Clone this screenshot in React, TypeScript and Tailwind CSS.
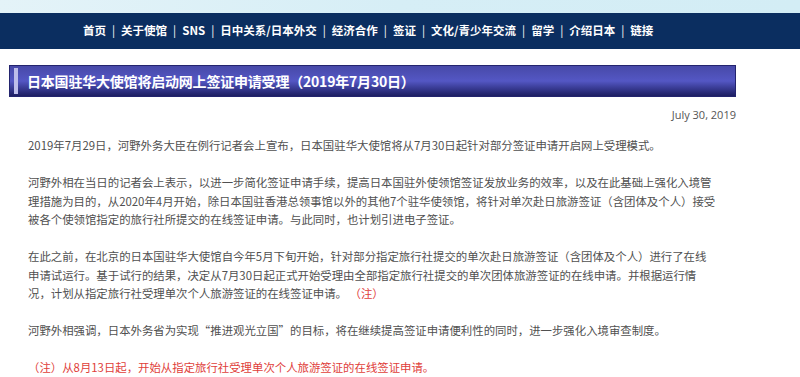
import React from "react";

const navItems = ["首页", "关于使馆", "SNS", "日中关系/日本外交", "经济合作", "签证", "文化/青少年交流", "留学", "介绍日本", "链接"];

export default function App() {
  const cjk = { fontFamily: '"Noto Sans CJK SC", "Noto Sans", sans-serif' };
  return (
    <div className="w-[800px] h-[377px] overflow-hidden bg-white" style={cjk}>
      <div className="h-[13px] bg-gradient-to-r from-[#e4f3f8] via-[#d6eef6] to-[#d3edf5]" />
      <div className="h-[36px] bg-[#0b2e60] flex items-center pl-[83px] text-white font-bold text-[11.5px] leading-none">
        {navItems.map((n, i) => (
          <React.Fragment key={n}>
            <span>{n}</span>
            {i < navItems.length - 1 && <span className="px-[6px] font-normal">|</span>}
          </React.Fragment>
        ))}
      </div>
      <div className="pt-[16px] pl-[9px]">
        <div className="w-[727px] h-[32px] flex items-center border border-[#23246e] bg-gradient-to-b from-[#4749a8] via-[#5457c4] to-[#1d1e62]">
          <div className="ml-[4px] w-[4px] h-[26px] bg-[#bdbdea]" />
          <div className="ml-[9px] text-white font-bold text-[14px] leading-none tracking-[-0.2px]">
            日本国驻华大使馆将启动网上签证申请受理（2019年7月30日）
          </div>
        </div>
      </div>
      <div className="w-[736px] mt-[9px] h-[18px] flex items-center justify-end text-[11px] text-[#555]" style={{ fontFamily: '"Open Sans", sans-serif' }}>
        July 30, 2019
      </div>
      <div className="pl-[28px] pt-[12px] w-[716.5px] text-[11.4px] leading-[18.5px] text-[#505050] flex flex-col gap-[18.5px]">
        <p>2019年7月29日，河野外务大臣在例行记者会上宣布，日本国驻华大使馆将从7月30日起针对部分签证申请开启网上受理模式。</p>
        <p>河野外相在当日的记者会上表示，以进一步简化签证申请手续，提高日本国驻外使领馆签证发放业务的效率，以及在此基础上强化入境管理措施为目的，从2020年4月开始，除日本国驻香港总领事馆以外的其他7个驻华使领馆，将针对单次赴日旅游签证（含团体及个人）接受被各个使领馆指定的旅行社所提交的在线签证申请。与此同时，也计划引进电子签证。</p>
        <p>
          在此之前，在北京的日本国驻华大使馆自今年5月下旬开始，针对部分指定旅行社提交的单次赴日旅游签证（含团体及个人）进行了在线申请试运行。基于试行的结果，决定从7月30日起正式开始受理由全部指定旅行社提交的单次团体旅游签证的在线申请。并根据运行情况，计划从指定旅行社受理单次个人旅游签证的在线签证申请。
          <span className="text-[#e0403a]">&nbsp;（注）</span>
        </p>
        <p>河野外相强调，日本外务省为实现“推进观光立国”的目标，将在继续提高签证申请便利性的同时，进一步强化入境审查制度。</p>
        <p className="text-[#e0403a]">（注）从8月13日起，开始从指定旅行社受理单次个人旅游签证的在线签证申请。</p>
      </div>
    </div>
  );
}
